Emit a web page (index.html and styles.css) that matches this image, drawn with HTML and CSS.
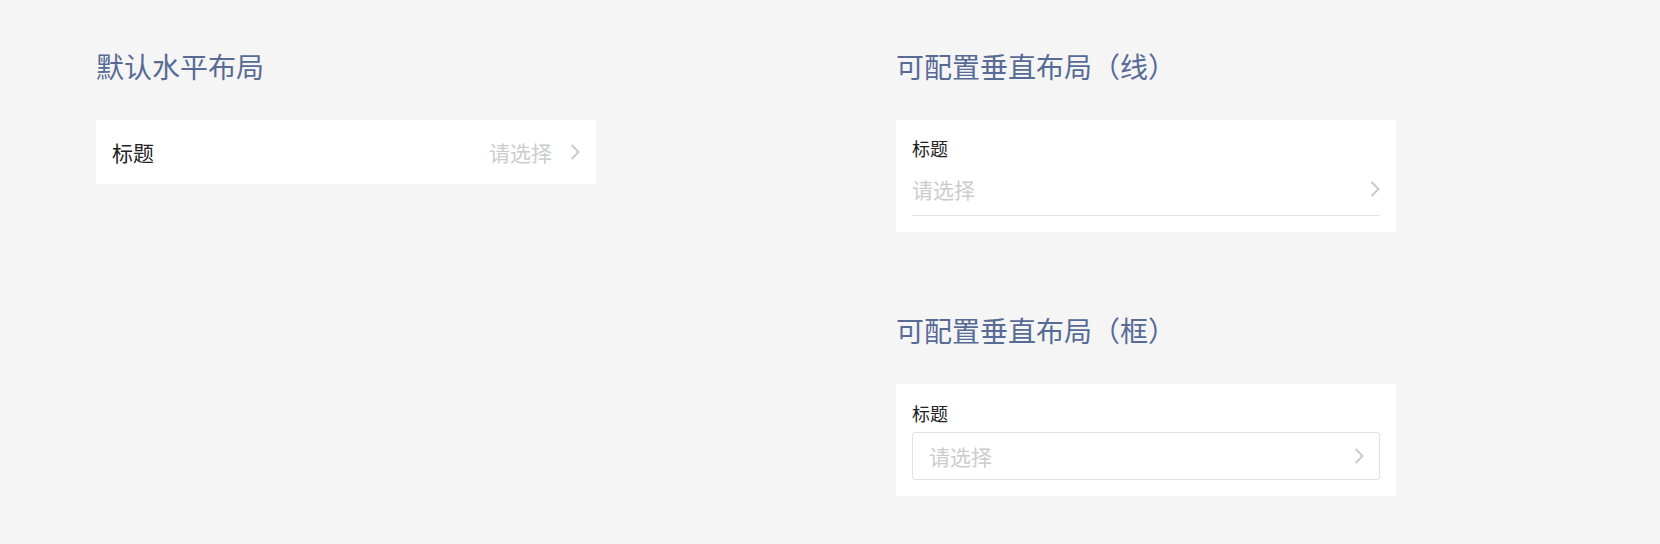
FILE: index.html
```html
<!DOCTYPE html>
<html lang="zh-CN">
<head>
<meta charset="utf-8">
<title>布局</title>
<link rel="stylesheet" href="styles.css">
</head>
<body>
<div class="page">
  <div class="col">
    <section class="section">
      <h2 class="section-title">默认水平布局</h2>
      <div class="card card-h">
        <span class="label-h">标题</span>
        <span class="spacer"></span>
        <span class="placeholder">请选择</span>
        <svg class="chevron chevron-h" width="10" height="16" viewBox="0 0 10 16"><path d="M1.5 1 L8.5 8 L1.5 15" fill="none" stroke="#c8c8c8" stroke-width="1.9"/></svg>
      </div>
    </section>
  </div>
  <div class="col">
    <section class="section">
      <h2 class="section-title">可配置垂直布局（线）</h2>
      <div class="card card-v card-line">
        <div class="label-v">标题</div>
        <div class="field field-line">
          <span class="placeholder">请选择</span>
          <svg class="chevron" width="10" height="16" viewBox="0 0 10 16"><path d="M1.5 1 L8.5 8 L1.5 15" fill="none" stroke="#c8c8c8" stroke-width="1.9"/></svg>
        </div>
      </div>
    </section>
    <section class="section">
      <h2 class="section-title">可配置垂直布局（框）</h2>
      <div class="card card-v card-box">
        <div class="label-v">标题</div>
        <div class="field field-box">
          <span class="placeholder">请选择</span>
          <svg class="chevron" width="10" height="16" viewBox="0 0 10 16"><path d="M1.5 1 L8.5 8 L1.5 15" fill="none" stroke="#c8c8c8" stroke-width="1.9"/></svg>
        </div>
      </div>
    </section>
  </div>
</div>
</body>
</html>
```
FILE: styles.css
```css
html, body {
  margin: 0;
  padding: 0;
  background: #f5f5f5;
}
body {
  font-family: "Noto Sans CJK SC", "Noto Sans", sans-serif;
  color: #222;
}
.page {
  display: grid;
  grid-template-columns: 500px 500px;
  column-gap: 300px;
  padding: 46px 96px 0 96px;
}
.col {
  display: flex;
  flex-direction: column;
  gap: 78px;
}
.section-title {
  margin: 0 0 34px 0;
  font-size: 28px;
  line-height: 40px;
  font-weight: 400;
  color: #576b95;
}
.card {
  background: #fff;
}
.card-h {
  display: flex;
  align-items: center;
  height: 64px;
  padding: 0 16px;
  box-sizing: border-box;
}
.label-h {
  font-size: 21px;
  line-height: 30px;
  color: #222;
}
.spacer {
  flex: 1;
}
.placeholder {
  font-size: 21px;
  line-height: 30px;
  color: #cccccc;
}
.chevron {
  display: block;
  flex: none;
}
.chevron-h {
  margin-left: 18px;
}
.card-v {
  padding: 15px 16px 16px 16px;
}
.card-box {
  padding-top: 16px;
}
.label-v {
  font-size: 18px;
  line-height: 26px;
  color: #222;
}
.field {
  display: flex;
  align-items: center;
  justify-content: space-between;
  box-sizing: border-box;
}
.field-line {
  margin-top: 5px;
  height: 50px;
  padding-bottom: 4px;
  border-bottom: 1px solid #e5e5e5;
}
.field-box {
  margin-top: 6px;
  height: 48px;
  border: 1px solid #e2e2e2;
  border-radius: 3px;
  padding: 0 15px 0 16px;
}
```
